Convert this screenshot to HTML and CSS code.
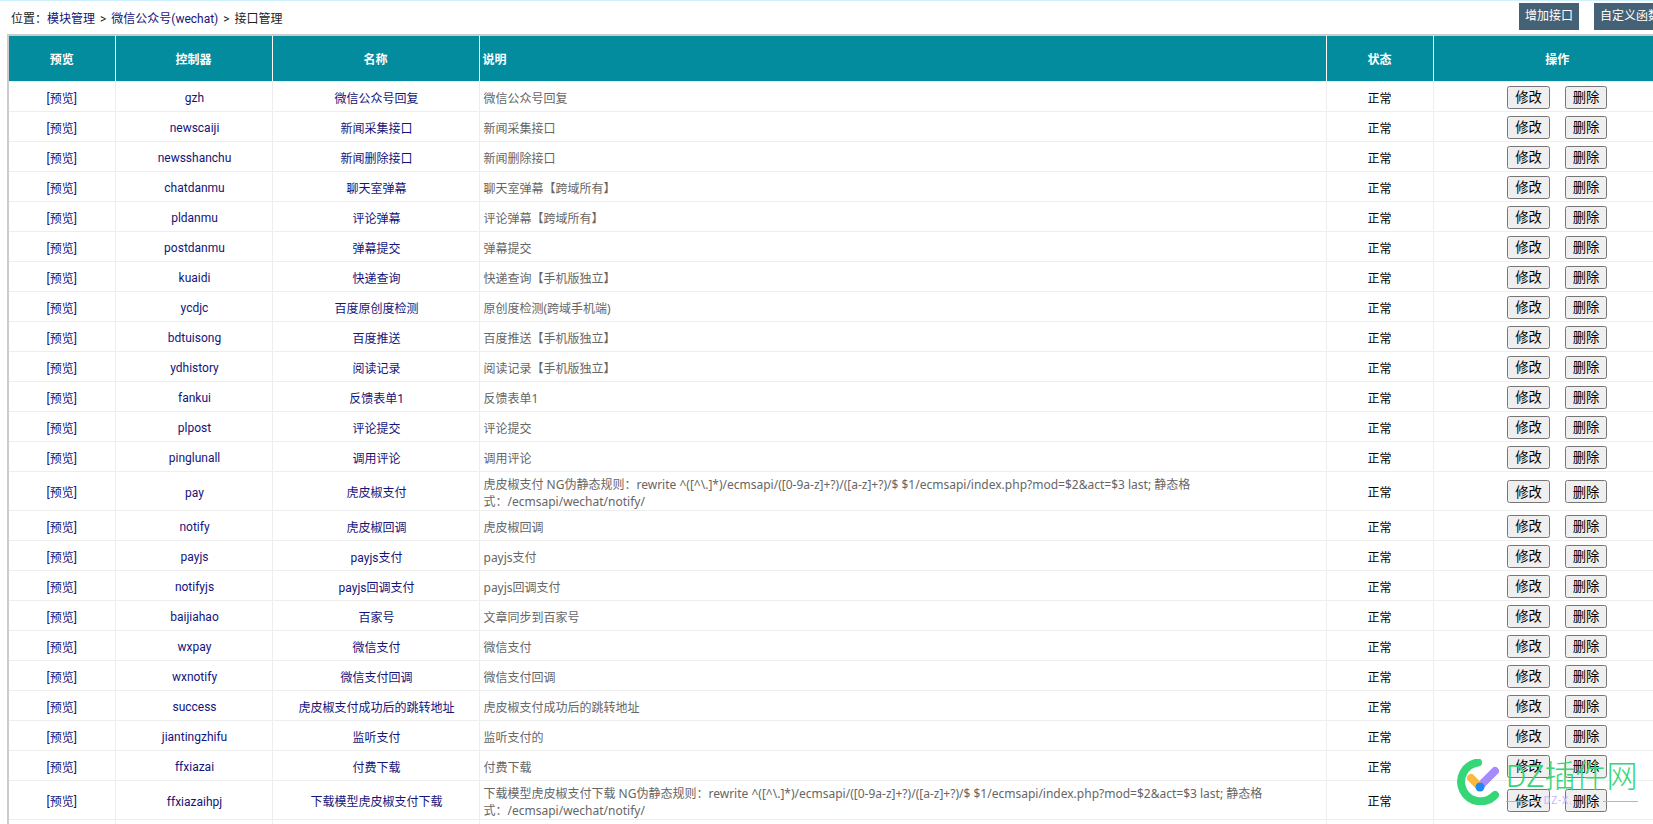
FILE: index.html
```html
<!DOCTYPE html>
<html lang="zh-CN">
  <head>
    <meta charset="UTF-8" />
    <title>接口管理</title>
    <link rel="stylesheet" href="styles.css">
  </head>
  <body>
    <!-- TOP BAR -->
    <div class="top-bar">
      <div class="crumbs">位置：<a href="#">模块管理</a> <i>&gt;</i> <a href="#">微信公众号(wechat)</a> <i>&gt;</i> 接口管理</div>
      <div class="top-actions">
        <a class="top-btn" href="#">增加接口</a>
        <a class="top-btn" href="#">自定义函数</a>
      </div>
    </div>

    <table class="api-table">
      <colgroup>
        <col class="col-view" /><col class="col-ctrl" /><col class="col-name" /><col class="col-desc" /><col class="col-state" /><col class="col-ops" />
      </colgroup>
      <thead>
        <tr><th>预览</th><th>控制器</th><th>名称</th><th class="left">说明</th><th>状态</th><th>操作</th></tr>
      </thead>
      <tbody id="rows"></tbody>
    </table>

    <!-- Watermark over the corner -->
    <div class="watermark">
      <svg class="wm-logo" width="48" height="46" viewBox="0 0 48 46" fill="none" stroke-linecap="round">
        <path d="M25 3.5A19.5 19.5 0 1 0 42 36" stroke="#34d678" stroke-width="8" />
        <path d="M27 27L42 12" stroke="#a78bfa" stroke-width="8" />
        <path d="M18 19L26 27" stroke="#fbb93f" stroke-width="8" />
        <circle cx="27" cy="28" r="4.5" fill="#1e88f5" />
      </svg>
      <div class="wm-text">
        <div class="wm-title">DZ插件网</div>
        <div class="wm-sub"><i></i><span>DZ-X.</span><i></i></div>
      </div>
    </div>

    <script src="app.js"></script>
  </body>
</html>
```

FILE: app.js
```js
// controller, name, description
const NG_RULE = " NG伪静态规则：rewrite ^([^\\.]*)/ecmsapi/([0-9a-z]+?)/([a-z]+?)/$ $1/ecmsapi/index.php?mod=$2&act=$3 last; 静态格式：/ecmsapi/wechat/notify/";
const rows = [
  ["gzh", "微信公众号回复", "微信公众号回复"],
  ["newscaiji", "新闻采集接口", "新闻采集接口"],
  ["newsshanchu", "新闻删除接口", "新闻删除接口"],
  ["chatdanmu", "聊天室弹幕", "聊天室弹幕【跨域所有】"],
  ["pldanmu", "评论弹幕", "评论弹幕【跨域所有】"],
  ["postdanmu", "弹幕提交", "弹幕提交"],
  ["kuaidi", "快递查询", "快递查询【手机版独立】"],
  ["ycdjc", "百度原创度检测", "原创度检测(跨域手机端)"],
  ["bdtuisong", "百度推送", "百度推送【手机版独立】"],
  ["ydhistory", "阅读记录", "阅读记录【手机版独立】"],
  ["fankui", "反馈表单1", "反馈表单1"],
  ["plpost", "评论提交", "评论提交"],
  ["pinglunall", "调用评论", "调用评论"],
  ["pay", "虎皮椒支付", "虎皮椒支付" + NG_RULE],
  ["notify", "虎皮椒回调", "虎皮椒回调"],
  ["payjs", "payjs支付", "payjs支付"],
  ["notifyjs", "payjs回调支付", "payjs回调支付"],
  ["baijiahao", "百家号", "文章同步到百家号"],
  ["wxpay", "微信支付", "微信支付"],
  ["wxnotify", "微信支付回调", "微信支付回调"],
  ["success", "虎皮椒支付成功后的跳转地址", "虎皮椒支付成功后的跳转地址"],
  ["jiantingzhifu", "监听支付", "监听支付的"],
  ["ffxiazai", "付费下载", "付费下载"],
  ["ffxiazaihpj", "下载模型虎皮椒支付下载", "下载模型虎皮椒支付下载" + NG_RULE]
];

const tbody = document.getElementById("rows");
rows.forEach(function (r) {
  const tr = document.createElement("tr");
  const desc = document.createElement("td");
  desc.className = "desc";
  desc.textContent = r[2];
  const link = function (text, cls) {
    const td = document.createElement("td");
    td.className = cls;
    const a = document.createElement("a");
    a.href = "#";
    a.textContent = text;
    td.appendChild(a);
    return td;
  };
  tr.appendChild(link("[预览]", "view"));
  tr.appendChild(link(r[0], "ctrl"));
  tr.appendChild(link(r[1], "name"));
  tr.appendChild(desc);
  const state = document.createElement("td");
  state.className = "state";
  state.textContent = "正常";
  tr.appendChild(state);
  const ops = document.createElement("td");
  ops.className = "ops";
  ops.innerHTML = '<button class="op-btn" type="button">修改</button><button class="op-btn" type="button">删除</button>';
  tr.appendChild(ops);
  tbody.appendChild(tr);
});

// the next row only just starts at the bottom of the window
const next = document.createElement("tr");
next.innerHTML = "<td></td><td></td><td></td><td></td><td></td><td></td>";
tbody.appendChild(next);
```

FILE: styles.css
```css
/* RESET */
* {
  box-sizing: border-box;
}
html,
body {
  margin: 0;
  padding: 0;
  height: 824px;
  overflow: hidden;
}
body {
  width: 1653px;
  position: relative;
  background: #fff;
  border-top: 1px solid #cdf1fd;
  font-family: Roboto, "Noto Sans CJK SC", sans-serif;
  font-size: 12px;
  color: #333;
}
a {
  color: #14147a;
  text-decoration: none;
}

/* TOP BAR */
.top-bar {
  display: flex;
  justify-content: space-between;
  width: 1690px;
  height: 33px;
  padding: 2px 0 0 11px;
}
.crumbs {
  padding-top: 6px;
  color: #222;
}
.crumbs i {
  font-style: normal;
  margin: 0 2px;
}
.top-actions {
  display: flex;
  gap: 15px;
  padding-right: 21px;
}
.top-btn {
  display: block;
  width: 60px;
  height: 27px;
  line-height: 27px;
  text-align: center;
  background: #446176;
  color: #fff;
  font-size: 12px;
  white-space: nowrap;
}
.top-btn + .top-btn {
  width: 75px;
  text-align: left;
  padding-left: 6px;
}

/* TABLE */
.api-table {
  width: 1673px;
  margin-left: 7px;
  border-collapse: collapse;
  table-layout: fixed;
  border: 2px solid #ccc;
  border-right: 0;
}
.col-view { width: 107px; }
.col-ctrl { width: 157px; }
.col-name { width: 207px; }
.col-desc { width: 847px; }
.col-state { width: 107px; }
.col-ops { width: 248px; }

.api-table th {
  height: 46px;
  padding: 0;
  background: #028c9e;
  color: #fff;
  font-weight: 700;
  border-left: 1px solid #fff;
  text-align: center;
}
.api-table th.left {
  text-align: left;
  padding-left: 3px;
}
.api-table td {
  height: 30px;
  padding: 2px 0 0;
  border: 1px solid #eee;
  text-align: center;
}
.api-table td.ctrl {
  padding: 4px 0 0 2px;
}
.api-table td.name {
  padding-left: 2px;
}
.api-table td.desc {
  font-family: "Noto Sans", "Noto Sans CJK SC", sans-serif;
  text-align: left;
  padding: 4px 60px 0 4px;
  line-height: 17px;
  color: #666;
}
.api-table td.state {
  color: #000;
}
.api-table td.ops {
  padding: 2px 0 0;
}

/* Row buttons keep the browser's default look */
.op-btn {
  font-family: "Noto Sans CJK SC", sans-serif;
  font-size: 13.33px;
  height: 23px;
  width: 43px;
  padding: 0;
  margin: 0 7.5px;
  line-height: 1;
  vertical-align: middle;
}
.op-btn + .op-btn {
  width: 42px;
}

/* Watermark */
.watermark {
  position: absolute;
  left: 1453px;
  top: 758px;
  display: flex;
  gap: 5px;
  pointer-events: none;
}
.wm-title {
  font-size: 31px;
  font-weight: 300;
  line-height: 36px;
  color: #34d678;
  white-space: nowrap;
}
.wm-sub {
  display: flex;
  align-items: center;
  height: 12px;
  font-size: 10px;
  line-height: 12px;
  color: #c4b5fb;
}
.wm-sub i {
  flex: 1;
  height: 1px;
  background: #b9a7f5;
}
.wm-sub span {
  width: 62px;
  padding-left: 3px;
  letter-spacing: 1px;
}
```
